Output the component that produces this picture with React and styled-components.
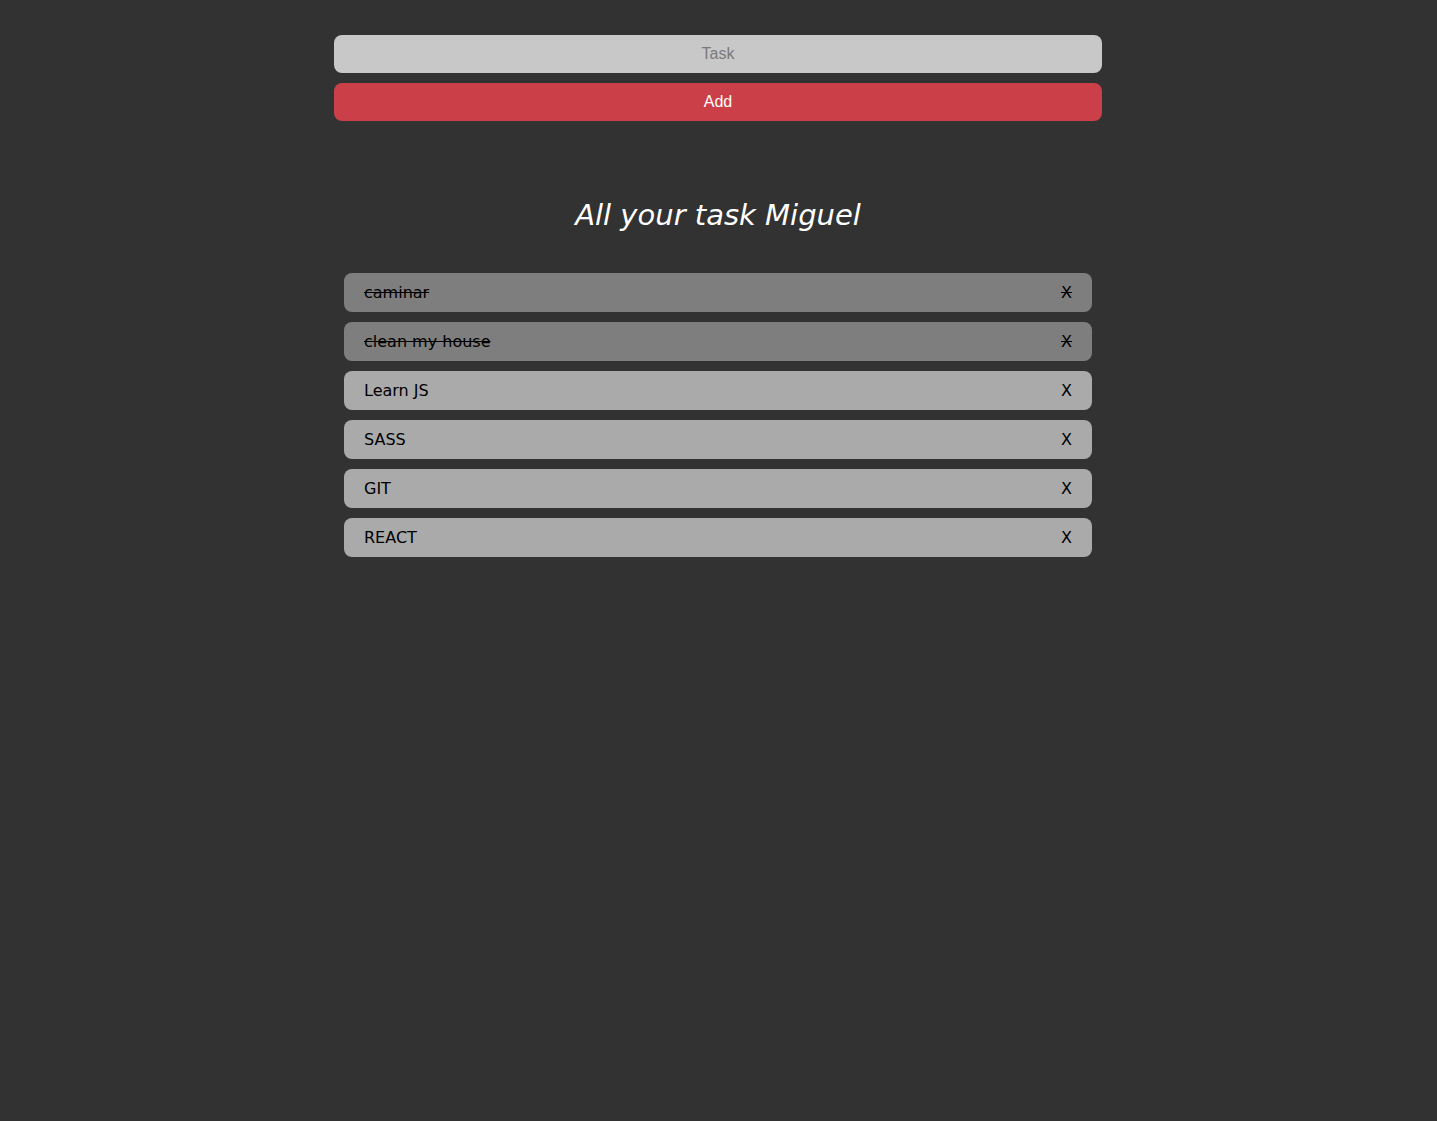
import React from "react";
import styled, { createGlobalStyle, css } from "styled-components";

const tasks = [
  { id: 1, name: "caminar", done: true },
  { id: 2, name: "clean my house", done: true },
  { id: 3, name: "Learn JS", done: false },
  { id: 4, name: "SASS", done: false },
  { id: 5, name: "GIT", done: false },
  { id: 6, name: "REACT", done: false },
];

export default function App() {
  return (
    <>
      <GlobalStyle />
      <Page>
        <Form onSubmit={(e) => e.preventDefault()}>
          <TaskInput type="text" placeholder="Task" />
          <AddButton type="submit">Add</AddButton>
        </Form>
        <Title>All your task Miguel</Title>
        <List>
          {tasks.map((task) => (
            <Item key={task.id} done={task.done}>
              <span>{task.name}</span>
              <Remove>X</Remove>
            </Item>
          ))}
        </List>
      </Page>
    </>
  );
}

const GlobalStyle = createGlobalStyle`
  body {
    margin: 0;
    background-color: #323232;
    min-height: 100vh;
    font-family: "DejaVu Sans", "Noto Sans", sans-serif;
  }
`;

const Page = styled.div`
  width: 768px;
  margin: 0 auto;
  padding: 35px 1px 0 0;
`;

const Form = styled.form`
  display: flex;
  flex-direction: column;
  gap: 10px;
`;

const fieldBase = css`
  box-sizing: border-box;
  width: 100%;
  height: 38px;
  border: none;
  border-radius: 8px;
  font-family: "Liberation Sans", Arial, sans-serif;
  font-size: 16px;
  text-align: center;
  outline: none;
`;

const TaskInput = styled.input`
  ${fieldBase}
  background-color: #c8c8c8;
  color: #222;

  &::placeholder {
    color: #7a7a7a;
  }
`;

const AddButton = styled.button`
  ${fieldBase}
  background-color: #cb3f48;
  color: #ffffff;
  cursor: pointer;
`;

const Title = styled.h1`
  margin: 76px 0 0;
  text-align: center;
  color: #ffffff;
  font-family: "DejaVu Sans", "Noto Sans", sans-serif;
  font-style: italic;
  font-weight: 200;
  font-size: 29px;
  line-height: 36px;
`;

const List = styled.ul`
  list-style: none;
  margin: 40px 10px 0;
  padding: 0;
  display: flex;
  flex-direction: column;
  gap: 10px;
`;

const Item = styled.li`
  display: flex;
  align-items: center;
  justify-content: space-between;
  height: 39px;
  padding: 0 20px;
  border-radius: 8px;
  background-color: ${(props) => (props.done ? "#7e7e7e" : "#aaaaaa")};
  color: #000000;
  font-size: 16px;
  text-decoration: ${(props) => (props.done ? "line-through" : "none")};
`;

const Remove = styled.span`
  cursor: pointer;
`;
